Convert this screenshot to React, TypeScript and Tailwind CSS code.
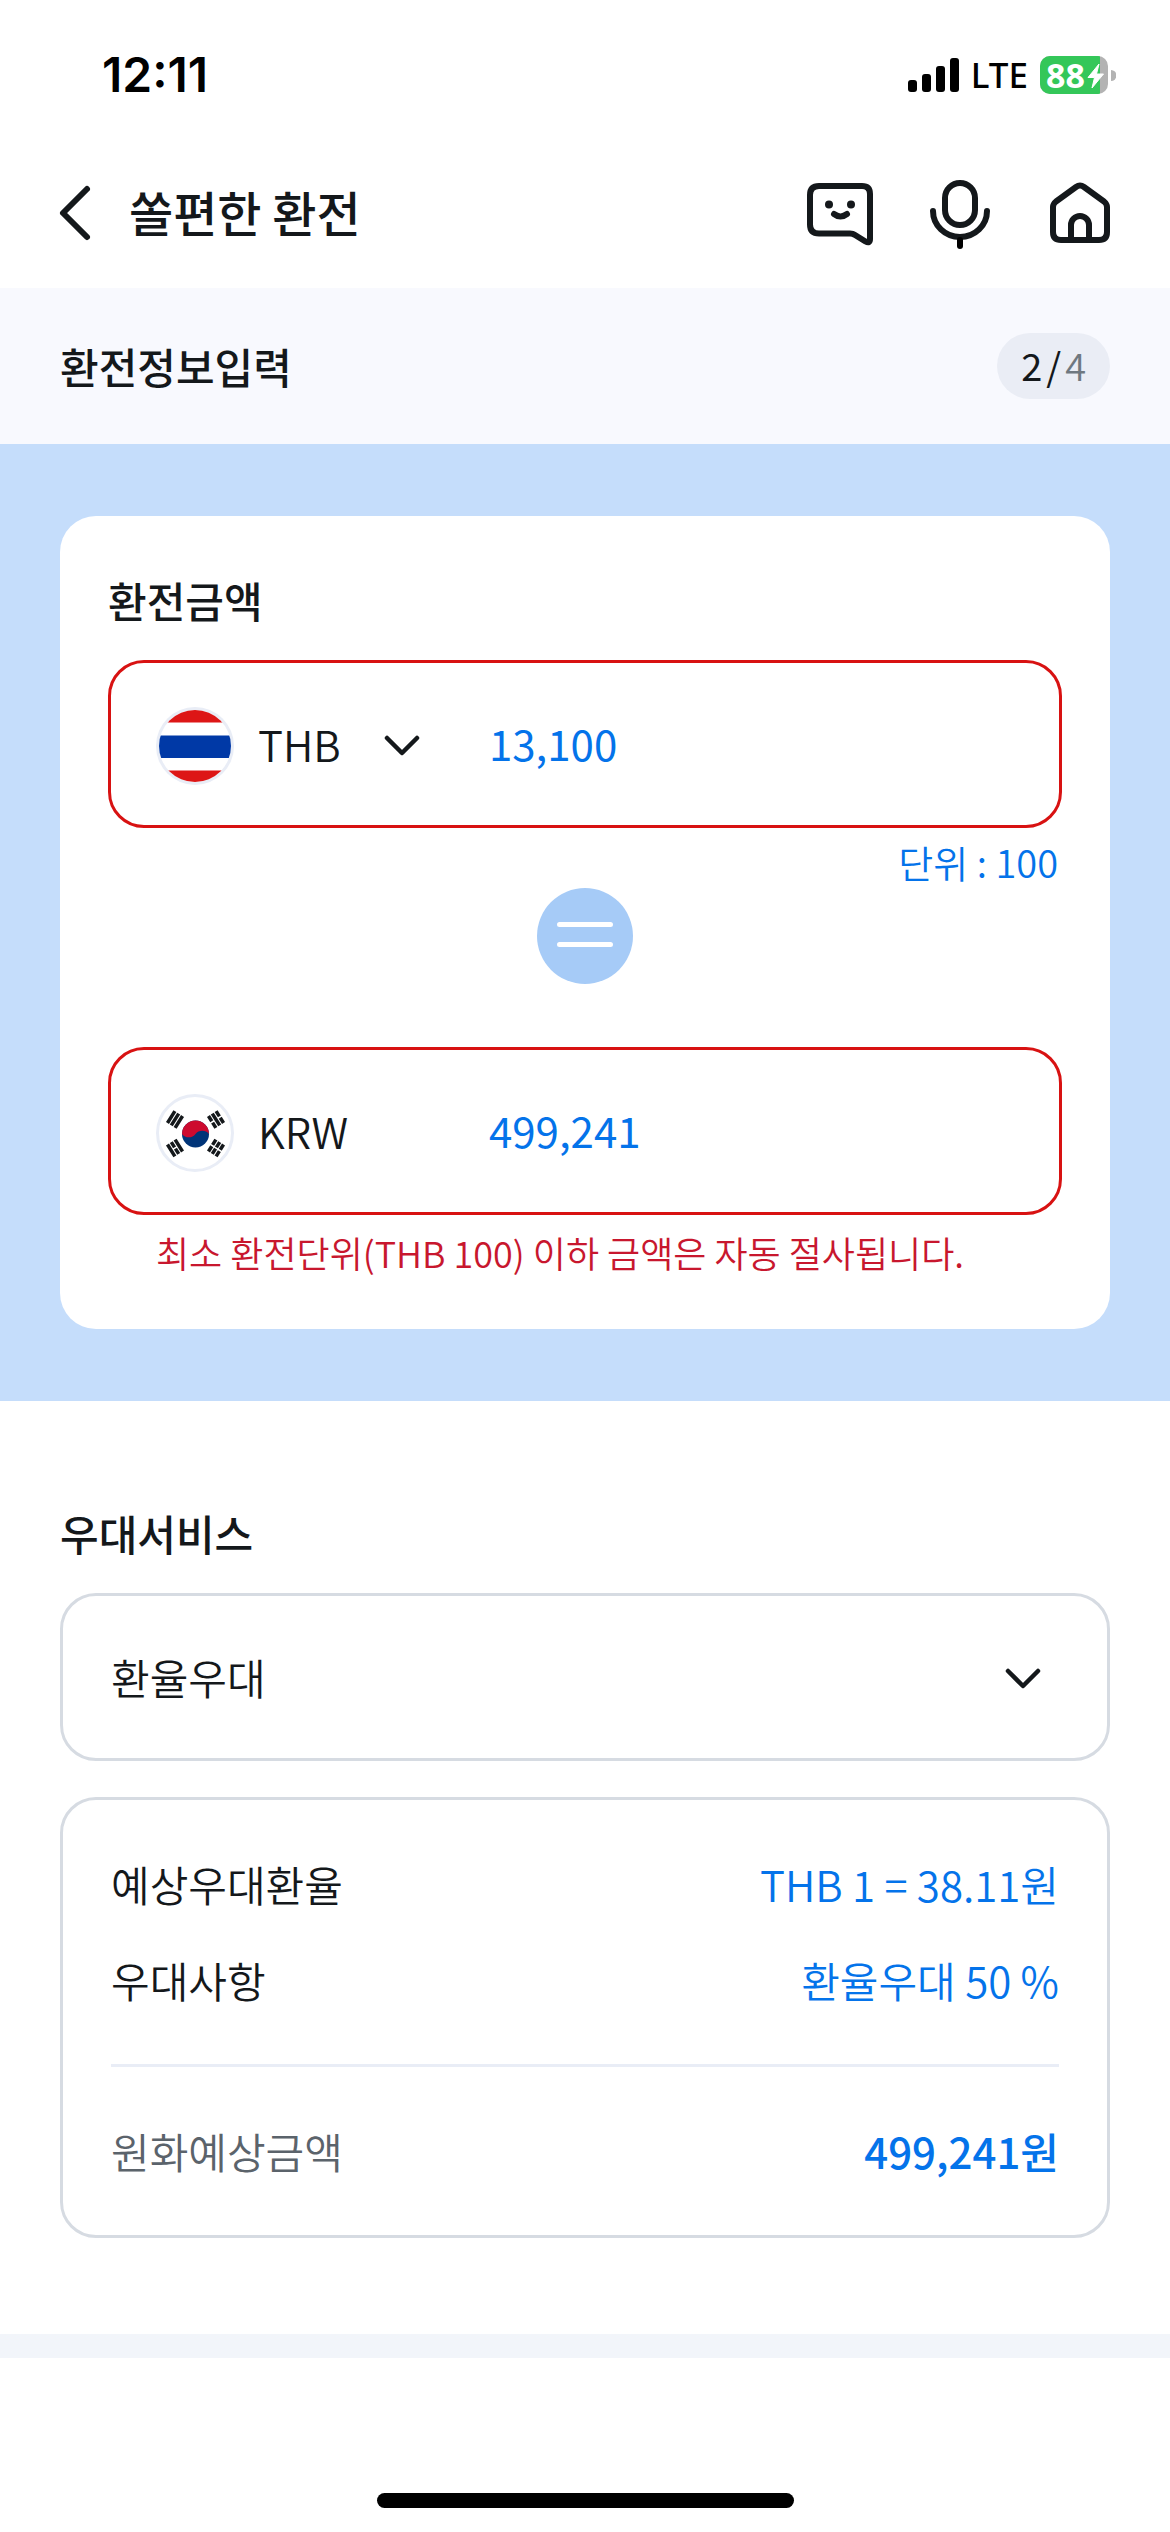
import { useState } from "react";
import type { ReactNode } from "react";

function ChevronDown() {
  return (
    <svg
      aria-hidden="true"
      viewBox="0 0 36 24"
      className="pointer-events-none col-start-1 row-start-1 mt-1 h-6 w-9 self-center justify-self-end"
      fill="none"
      stroke="#14181b"
      strokeWidth="4.500"
      strokeLinecap="round"
      strokeLinejoin="round"
    >
      <path d="M3 4 18 19 33 4" />
    </svg>
  );
}

function Signal() {
  return (
    <svg role="img" aria-label="신호 세기" viewBox="0 0 51 34" className="h-[34px] w-[51px]" fill="#000">
      <rect x="0" y="22" width="9" height="12" rx="3" />
      <rect x="14" y="16" width="9" height="18" rx="3" />
      <rect x="28" y="8" width="9" height="26" rx="3" />
      <rect x="42" y="0" width="9" height="34" rx="3" />
    </svg>
  );
}

function Battery() {
  return (
    <div className="relative flex h-[38px] w-[76px] items-center">
      <svg aria-hidden="true" viewBox="0 0 76 38" className="absolute inset-0 h-full w-full">
        <clipPath id="battery">
          <rect width="68" height="38" rx="10" />
        </clipPath>
        <g clipPath="url(#battery)">
          <rect width="68" height="38" fill="#b3b3b3" />
          <rect width="60" height="38" fill="#34c759" />
        </g>
        <path d="M71 14a5.500 5.500 0 0 1 0 11Z" fill="#b3b3b3" />
        <path d="M59 8 48 21.500h6.500L52 32 63.500 18H56.500Z" fill="#fff" stroke="#fff" strokeLinejoin="round" />
      </svg>
      <span className="relative pl-[6px] font-['Noto_Sans',sans-serif] text-[34px] leading-[38px] font-bold text-white">
        88
      </span>
    </div>
  );
}

function HeaderIcon({ label, children }: { label: string; children: ReactNode }) {
  return (
    <button type="button" aria-label={label} className="size-[72px]">
      <svg
        aria-hidden="true"
        viewBox="0 0 72 72"
        className="size-full"
        fill="none"
        stroke="#14181b"
        strokeWidth="6"
        strokeLinecap="round"
        strokeLinejoin="round"
      >
        {children}
      </svg>
    </button>
  );
}

function ThaiFlag() {
  return (
    <svg aria-hidden="true" viewBox="0 0 78 78" className="mt-1 size-[78px] shrink-0">
      <clipPath id="thai">
        <circle cx="39" cy="39" r="36" />
      </clipPath>
      <circle cx="39" cy="39" r="39" fill="#e9edf6" />
      <g clipPath="url(#thai)">
        <rect width="78" height="78" fill="#fff" />
        <rect width="78" height="15.500" fill="#dd1616" />
        <rect y="28.500" width="78" height="22.500" fill="#0039a6" />
        <rect y="63.500" width="78" height="15" fill="#dd1616" />
      </g>
    </svg>
  );
}

function KoreanFlag() {
  return (
    <svg aria-hidden="true" viewBox="0 0 78 78" className="mt-1 size-[78px] shrink-0">
      <circle cx="39" cy="39" r="37.500" fill="#fff" stroke="#e9edf6" strokeWidth="3" />
      <circle cx="39.500" cy="40" r="13.500" fill="#003478" />
      <path d="M26 40a13.500 13.500 0 0 1 27 0a8.500 8.500 0 0 0-13.500 0a8.500 8.500 0 0 1-13.500 0Z" fill="#cd0a2f" />
      <g stroke="#14181b" strokeWidth="3.500">
        <path transform="translate(19 25.500) rotate(32)" d="M-4.500-7V7M0-7V7M4.500-7V7" />
        <path transform="translate(60 25.500) rotate(-32)" d="M-4.500-7v6.200M-4.500 .8V7M0-7V7M4.500-7v6.200M4.500 .8V7" />
        <path transform="translate(19 54) rotate(-32)" d="M-4.500-7V7M0-7v6.200M0 .8V7M4.500-7V7" />
        <path transform="translate(60 54) rotate(32)" d="M-4.500-7v6.200M-4.500 .8V7M0-7v6.200M0 .8V7M4.500-7v6.200M4.500 .8V7" />
      </g>
    </svg>
  );
}

const fieldBox = "flex h-[168px] items-center rounded-[36px] border-3 border-[#d81212] px-[45px]";
const amountInput = "mb-1 h-[72px] min-w-0 flex-1 bg-transparent font-normal text-[#0473ea] outline-none";

function SummaryRow({ label, value, total }: { label: string; value: string; total?: boolean }) {
  return (
    <div className="flex items-center justify-between">
      <dt className={total ? "text-[#5b636b]" : ""}>{label}</dt>
      <dd className={total ? "font-medium text-[#0473ea]" : "text-[#0473ea]"}>{value}</dd>
    </div>
  );
}

export default function App() {
  const [thb, setThb] = useState("13,100");
  const [krw, setKrw] = useState("499,241");

  return (
    <div className="min-h-screen bg-white font-['Noto_Sans_CJK_KR',sans-serif] text-[42px] leading-[60px] font-[350] text-[#14181b]">
      <div className="flex h-[150px] items-center justify-between pr-[54px] pl-[102px] text-black">
        <time className="font-['Inter',sans-serif] text-[48px] font-semibold">12:11</time>
        <div className="flex items-center">
          <Signal />
          <span className="mr-3 ml-3 font-['Noto_Sans',sans-serif] text-[35px] font-medium">LTE</span>
          <Battery />
        </div>
      </div>

      <header className="mb-3 flex h-[126px] items-center pr-[54px] pl-[57px]">
        <button type="button" aria-label="뒤로" className="mr-9">
          <svg
            aria-hidden="true"
            viewBox="0 0 36 60"
            className="h-[60px] w-9"
            fill="none"
            stroke="#14181b"
            strokeWidth="6"
            strokeLinecap="round"
            strokeLinejoin="round"
          >
            <path d="M30 6 6 30 30 54" />
          </svg>
        </button>
        <h1 className="flex-1 pb-1 text-[48px] font-medium">쏠편한 환전</h1>
        <div className="flex gap-12">
          <HeaderIcon label="채팅">
            <path d="M15 9H58q8 0 8 8V62q0 5-4.500 2.500L51 58q-2-1.500-5-1.500H15q-9 0-9-9V18q0-9 9-9Z" />
            <path d="M30 37q6.500 5 13 0" />
            <g fill="#14181b" stroke="none">
              <circle cx="25" cy="27.500" r="4" />
              <circle cx="47" cy="27.500" r="4" />
            </g>
          </HeaderIcon>
          <HeaderIcon label="음성">
            <rect x="21" y="6" width="30" height="42" rx="15" />
            <path d="M9 34a27 26 0 0 0 54 0" />
            <path d="M36 63v6" stroke="#000" />
          </HeaderIcon>
          <HeaderIcon label="홈">
            <path d="M9 55V30q0-3 3-5.500L32 10q4-3 8 0L60 24.500q3 2.500 3 5.500V55q0 8-8 8H17q-8 0-8-8Z" />
            <path d="M27 63V48a9 9 0 0 1 18 0V63" />
          </HeaderIcon>
        </div>
      </header>

      <main>
        <div className="flex h-[156px] items-center justify-between bg-[#f8f9fe] px-[60px]">
          <h2 className="font-medium">환전정보입력</h2>
          <p className="flex h-[66px] items-center gap-1 rounded-full bg-[#eaedf5] px-6 pb-[2px] text-[38px] font-normal">
            <span>2</span>
            <span>/</span>
            <span className="font-[350] text-[#6f7880]">4</span>
          </p>
        </div>

        <section className="bg-[#c5ddfb] px-[60px] py-[72px]">
          <div className="rounded-[36px] bg-white px-12 pt-[54px] pb-12">
            <h3 className="mb-[30px] font-medium">환전금액</h3>
            <div className={fieldBox}>
              <ThaiFlag />
              <div className="mr-[69px] ml-6 grid w-[162px]">
                <select aria-label="통화" className="col-start-1 row-start-1 h-[72px] appearance-none bg-transparent outline-none">
                  <option>THB</option>
                </select>
                <ChevronDown />
              </div>
              <input aria-label="THB 환전금액" inputMode="numeric" value={thb} onChange={(e) => setThb(e.target.value)} className={amountInput} />
            </div>
            <p className="pt-2 pr-1 text-right text-[38px] leading-[52px] text-[#0473ea]">단위 : 100</p>
            <svg aria-hidden="true" viewBox="0 0 96 96" className="mx-auto mb-[63px] block size-24">
              <circle cx="48" cy="48" r="48" fill="#a6cbf7" />
              <path d="M22.500 36.500h51M22.500 56.500h51" stroke="#fff" strokeWidth="5" strokeLinecap="round" />
            </svg>
            <div className={fieldBox}>
              <KoreanFlag />
              <label htmlFor="krw" className="mr-[69px] ml-6 w-[162px]">
                KRW
              </label>
              <input id="krw" inputMode="numeric" value={krw} onChange={(e) => setKrw(e.target.value)} className={amountInput} />
            </div>
            <p className="mt-3 mb-1 pl-12 text-[36px] leading-[50px] text-[#c8172e]">
              최소 환전단위(THB 100) 이하 금액은 자동 절사됩니다.
            </p>
          </div>
        </section>

        <section className="px-[60px] pt-[102px] pb-24">
          <h3 className="mb-[30px] font-medium">
            <label htmlFor="service">우대서비스</label>
          </h3>
          <div className="mb-9 grid h-[168px] rounded-[36px] border-3 border-[#d6dbe2] pr-[66px] pl-12">
            <select id="service" className="col-start-1 row-start-1 appearance-none bg-transparent outline-none">
              <option>환율우대</option>
            </select>
            <ChevronDown />
          </div>
          <dl className="rounded-[36px] border-3 border-[#d6dbe2] px-12 py-[54px]">
            <SummaryRow label="예상우대환율" value="THB 1 = 38.11원" />
            <div className="mt-9">
              <SummaryRow label="우대사항" value="환율우대 50 %" />
            </div>
            <div className="mt-[54px] border-t-3 border-[#e9edf6] pt-[54px]">
              <SummaryRow label="원화예상금액" value="499,241원" total />
            </div>
          </dl>
        </section>

        <div className="h-6 bg-[#f2f5fa]" />
      </main>

      <div className="mx-auto mt-[135px] h-[15px] w-[417px] rounded-full bg-black" />
    </div>
  );
}
